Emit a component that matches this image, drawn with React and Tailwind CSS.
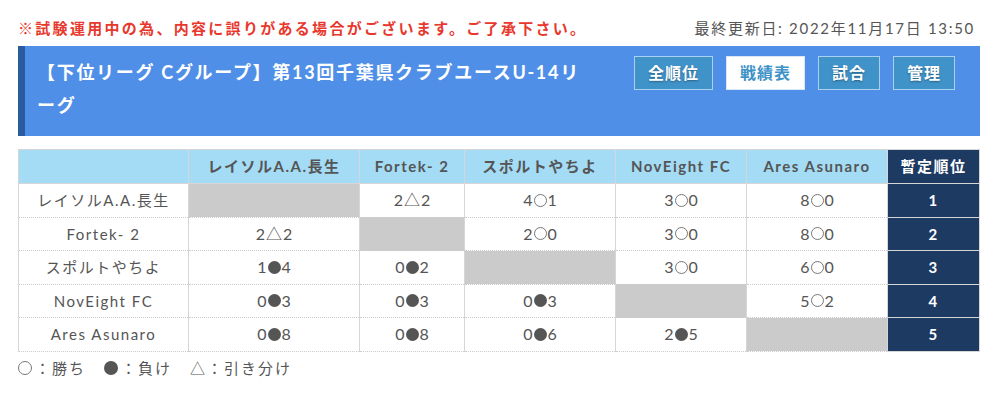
import React from "react";

const teams = ["レイソルA.A.長生", "Fortek- 2", "スポルトやちよ", "NovEight FC", "Ares Asunaro"];

// each row: results vs each team (null = self)
const results = [
  [null, "2△2", "4◯1", "3◯0", "8◯0"],
  ["2△2", null, "2◯0", "3◯0", "8◯0"],
  ["1●4", "0●2", null, "3◯0", "6◯0"],
  ["0●3", "0●3", "0●3", null, "5◯2"],
  ["0●8", "0●8", "0●6", "2●5", null],
];

const colWidths = ["w-[170px]", "w-[171px]", "w-[105px]", "w-[151px]", "w-[131px]", "w-[141px]", "w-[92px]"];

const cellBorder =
  "border-x border-x-[#d6d6d6] border-y border-y-[#ccc] [border-top-style:dotted] [border-bottom-style:dotted]";

const Score = ({ value }) => {
  const [a, mark, b] = [value[0], value[1], value[2]];
  return (
    <span className="inline-flex items-center tracking-normal text-[16px]">
      {a}
      {mark === "●" && <span className="mx-[1px] inline-block w-[13px] h-[13px] rounded-full bg-[#555]" />}
      {mark === "◯" && <span className="mx-[1px] inline-block w-[13px] h-[13px] rounded-full border border-[#777]" />}
      {mark === "△" && <span className="mx-[1px]">△</span>}
      {b}
    </span>
  );
};

const NavButton = ({ label, active, w }) => (
  <button
    className={
      (active
        ? "bg-white border border-[#d8e6f5] text-[#3d92c8]"
        : "bg-[#3f93c9] border border-[#a9d0ee] text-white [text-shadow:0_1px_2px_rgba(0,0,0,0.35)]") +
      " h-[34px] text-[16px] font-bold tracking-[1px] " +
      w
    }
  >
    {label}
  </button>
);

export default function App() {
  return (
    <div
      className="w-[1000px] h-[395px] bg-white text-[#555] px-[18px] pt-[17px]"
      style={{ fontFamily: 'Lato, "Noto Sans CJK JP", sans-serif' }}
    >
      <div className="flex justify-between items-center h-[22px] pr-[7px]">
        <p className="text-[#e8382d] text-[15px] font-bold tracking-[2.3px]">
          ※試験運用中の為、内容に誤りがある場合がございます。ご了承下さい。
        </p>
        <p className="text-[#555] text-[15px] tracking-[1.7px]">最終更新日: 2022年11月17日 13:50</p>
      </div>

      <div className="mt-[7px] w-[962px] h-[90px] bg-[#508fe7] border-l-[7px] border-[#2a5aa0] flex justify-between items-start pl-[12px] pr-[25px] pt-[10px]">
        <h1 className="w-[555px] text-white text-[18px] font-bold leading-[33px] tracking-[1.7px]">
          【下位リーグ Cグループ】第13回千葉県クラブユースU-14リーグ
        </h1>
        <div className="flex gap-[13px]">
          <NavButton label="全順位" w="w-[79px]" />
          <NavButton label="戦績表" w="w-[79px]" active />
          <NavButton label="試合" w="w-[62px]" />
          <NavButton label="管理" w="w-[62px]" />
        </div>
      </div>

      <table className="mt-[13px] w-[961px] border-collapse table-fixed text-[15px] tracking-[1.5px]">
        <colgroup>
          {colWidths.map((w, i) => (
            <col key={i} className={w} />
          ))}
        </colgroup>
        <thead>
          <tr className="h-[34px] bg-[#a4dcf6]">
            <th className="border border-[#d6d6d6]" />
            {teams.map((t) => (
              <th key={t} className="border border-[#d6d6d6] font-bold text-[#555] text-center">
                {t}
              </th>
            ))}
            <th className="border border-[#d6d6d6] bg-[#1d3a63] text-white font-bold">暫定順位</th>
          </tr>
        </thead>
        <tbody>
          {teams.map((t, r) => (
            <tr key={t} className="h-[33.5px]">
              <td className={cellBorder + " text-center"}>{t}</td>
              {results[r].map((v, c) =>
                v === null ? (
                  <td key={c} className={cellBorder + " bg-[#cbcbcb]"} />
                ) : (
                  <td key={c} className={cellBorder + " text-center"}>
                    <Score value={v} />
                  </td>
                )
              )}
              <td className="bg-[#1d3a63] text-white font-bold text-center border border-[#d6d6d6]">{r + 1}</td>
            </tr>
          ))}
        </tbody>
      </table>

      <div className="mt-[5px] flex items-center text-[15px] text-[#555] tracking-[2px]">
        <span className="inline-block w-[14px] h-[14px] rounded-full border border-[#777] mr-[3px]" />
        <span>：勝ち</span>
        <span className="ml-[18px] inline-block w-[14px] h-[14px] rounded-full bg-[#555] mr-[3px]" />
        <span>：負け</span>
        <span className="ml-[18px]">△：引き分け</span>
      </div>
    </div>
  );
}
